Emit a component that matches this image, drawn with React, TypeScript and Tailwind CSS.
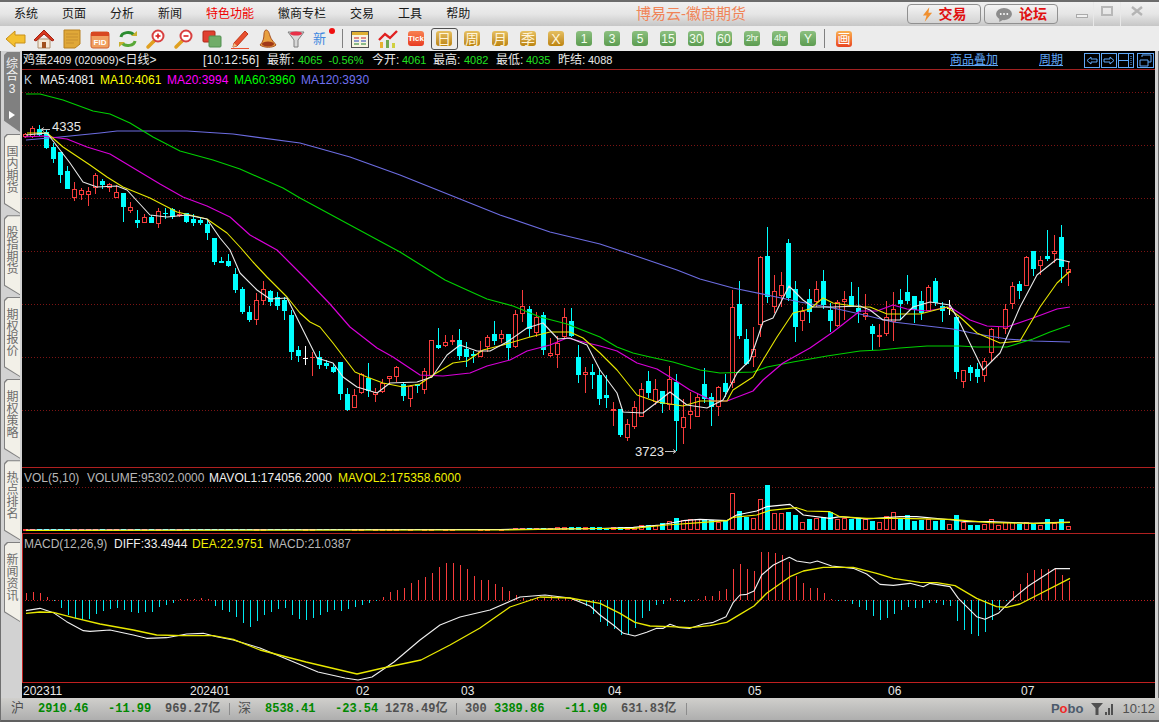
import React from "react";

type Candle = [string, number, number, number, number];

// type, body top, body bottom, wick top, wick bottom (page pixels); x = 25 + 7 * index
const CANDLES: Candle[] = [
  ["r", 134, 137, 133, 138], ["r", 128, 137, 126, 138], ["c", 129, 135, 125, 136], ["c", 132, 148, 129, 149], ["c", 147, 159, 143, 163],
  ["c", 152, 175, 152, 183], ["c", 171, 189, 166, 189], ["r", 189, 198, 182, 201], ["r", 190, 195, 188, 200], ["r", 191, 195, 187, 206],
  ["r", 175, 188, 173, 194], ["c", 181, 185, 179, 189], ["r", 184, 188, 183, 192], ["r", 192, 198, 185, 198], ["c", 193, 207, 193, 222],
  ["r", 207, 211, 202, 213], ["c", 220, 223, 210, 228], ["r", 217, 223, 214, 223], ["c", 217, 223, 215, 223], ["r", 211, 224, 208, 228],
  ["c", 213, 214, 208, 219], ["c", 209, 217, 208, 219], ["r", 214, 216, 210, 217], ["c", 213, 222, 213, 223], ["c", 219, 223, 214, 226],
  ["c", 220, 223, 217, 225], ["c", 224, 233, 220, 240], ["c", 238, 262, 238, 265], ["c", 261, 263, 257, 263], ["c", 261, 266, 254, 267],
  ["c", 274, 290, 268, 293], ["c", 289, 312, 287, 314], ["c", 312, 320, 306, 322], ["r", 300, 320, 293, 325], ["r", 289, 301, 281, 305],
  ["c", 291, 302, 290, 306], ["c", 297, 306, 292, 310], ["c", 300, 311, 297, 320], ["c", 315, 352, 310, 360], ["c", 350, 356, 346, 362],
  ["w", 358, 358, 346, 365], ["r", 357, 357, 352, 376], ["c", 357, 365, 351, 369], ["c", 363, 366, 360, 369], ["c", 367, 372, 363, 373],
  ["c", 362, 394, 362, 400], ["c", 394, 410, 388, 411], ["r", 395, 408, 389, 408], ["r", 374, 393, 373, 394], ["c", 378, 391, 363, 397],
  ["r", 392, 395, 388, 402], ["r", 383, 392, 379, 393], ["r", 376, 379, 376, 385], ["r", 367, 377, 366, 382], ["c", 384, 396, 383, 401],
  ["r", 386, 399, 385, 407], ["c", 384, 386, 384, 393], ["r", 371, 390, 368, 394], ["r", 340, 376, 340, 378], ["c", 345, 348, 328, 349],
  ["r", 342, 346, 335, 347], ["r", 340, 342, 335, 345], ["c", 340, 356, 329, 360], ["c", 349, 357, 342, 367], ["c", 354, 356, 351, 363],
  ["r", 351, 357, 341, 357], ["r", 337, 347, 335, 352], ["c", 334, 341, 321, 345], ["r", 334, 339, 330, 343], ["c", 334, 348, 334, 360],
  ["r", 314, 347, 310, 348], ["r", 306, 314, 290, 322], ["c", 309, 329, 306, 337], ["r", 317, 333, 312, 337], ["c", 315, 350, 312, 355],
  ["r", 353, 356, 338, 357], ["r", 343, 355, 336, 368], ["r", 317, 337, 308, 338], ["c", 321, 336, 308, 337], ["c", 357, 375, 345, 383],
  ["r", 372, 375, 367, 393], ["c", 372, 375, 364, 389], ["c", 375, 399, 368, 405], ["c", 395, 398, 375, 408], ["r", 409, 411, 402, 426],
  ["c", 409, 435, 409, 437], ["r", 424, 438, 419, 441], ["r", 407, 427, 401, 429], ["r", 389, 417, 383, 417], ["c", 381, 393, 371, 398],
  ["r", 389, 402, 379, 405], ["c", 391, 404, 391, 413], ["r", 379, 405, 366, 410], ["c", 382, 421, 374, 451], ["r", 417, 428, 399, 444],
  ["r", 411, 415, 392, 429], ["r", 397, 417, 393, 417], ["c", 384, 399, 368, 403], ["c", 397, 407, 393, 426], ["r", 387, 407, 386, 416],
  ["c", 383, 392, 374, 397], ["r", 307, 383, 290, 388], ["c", 304, 336, 281, 339], ["c", 339, 364, 329, 365], ["r", 349, 357, 327, 367],
  ["r", 257, 325, 256, 337], ["c", 256, 297, 227, 303], ["r", 291, 307, 275, 313], ["r", 285, 296, 272, 307], ["c", 243, 298, 239, 301],
  ["c", 289, 327, 281, 342], ["r", 311, 321, 307, 331], ["c", 299, 312, 289, 323], ["r", 289, 302, 281, 307], ["c", 281, 305, 270, 309],
  ["c", 310, 321, 303, 332], ["r", 302, 326, 300, 327], ["r", 299, 302, 291, 320], ["c", 296, 307, 282, 307], ["c", 308, 312, 287, 323],
  ["r", 313, 317, 294, 320], ["c", 326, 334, 324, 350], ["r", 335, 337, 324, 347], ["r", 317, 334, 301, 336], ["r", 309, 322, 292, 341],
  ["c", 300, 304, 289, 320], ["c", 292, 301, 275, 304], ["c", 296, 310, 296, 323], ["c", 301, 313, 291, 320], ["r", 287, 311, 285, 311],
  ["c", 281, 303, 278, 306], ["c", 306, 311, 302, 322], ["w", 308, 308, 300, 315], ["c", 317, 372, 317, 379], ["r", 370, 382, 370, 388],
  ["c", 367, 373, 365, 381], ["c", 369, 377, 363, 383], ["r", 361, 376, 358, 382], ["r", 329, 353, 328, 362], ["r", 334, 335, 327, 339],
  ["r", 309, 329, 304, 334], ["r", 286, 304, 282, 309], ["c", 284, 291, 281, 299], ["r", 257, 286, 256, 286], ["c", 251, 269, 251, 276],
  ["r", 260, 266, 256, 275], ["c", 256, 259, 230, 261], ["r", 251, 254, 235, 263], ["c", 237, 267, 225, 283], ["r", 269, 273, 262, 286],
];

// bar tops from index 83 on, in crop pixels (page y = 470 + top / 3)
const VOL_TOPS = [
  176, 172, 172, 172, 170, 166, 166, 165, 160, 154, 144, 151, 148, 148, 148, 151, 155, 150, 70, 124,
  140, 144, 88, 45, 130, 130, 126, 135, 157, 147, 143, 142, 127, 147, 143, 147, 143, 147, 153, 157,
  139, 127, 145, 136, 152, 149, 147, 153, 151, 162, 135, 155, 165, 165, 162, 148, 165, 155, 155, 162,
  155, 160, 165, 147, 158, 147, 168,
];

const MACD = [
  7, 8, 7, 3, -1, -8, -15, -18, -20, -19, -14, -11, -9, -8, -10, -12, -13, -12, -12, -7,
  -5, -3, 1, 1, 1, 2, 1, -6, -10, -12, -17, -23, -27, -21, -15, -12, -9, -8, -15, -19,
  -20, -18, -15, -12, -10, -11, -9, -7, -5, -3, -1, 3, 8, 10, 12, 17, 20, 23, 27, 33,
  37, 37, 35, 31, 24, 20, 20, 16, 13, 9, 5, 2, 1, 3, 2, 4, 3, 3, 2, -1, -6, -14,
  -22, -26, -29, -35, -34, -28, -18, -11, -5, -4, 2, -1, -2, -1, 1, 4, 4, 9, 11, 31,
  36, 31, 29, 48, 48, 47, 45, 38, 24, 17, 12, 12, 7, 1, -1, -1, -4, -7, -10, -16,
  -20, -18, -14, -10, -7, -8, -8, -3, -3, -5, -6, -21, -30, -34, -36, -32, -20, -10, -1, 9,
  16, 27, 30, 31, 31, 31, 25, 19,
];

type Pt = [number, number];
const pts = (list: Pt[]) => list.map(([x, y]) => `${x},${y}`).join(" ");
// zoomed crop coordinates to page pixels
const crop = (ox: number, oy: number, list: Pt[]): Pt[] => list.map(([x, y]) => [ox + x / 3, oy + y / 3]);

const MA120: Pt[] = [[26, 140], [60, 137], [100, 133], [117, 131], [157, 131], [187, 131], [233, 134], [300, 143], [350, 157], [400, 175], [450, 195], [500, 215], [550, 232], [600, 244], [633, 255], [677, 270], [700, 279], [733, 288], [767, 295], [800, 302], [833, 308], [860, 314], [893, 322], [927, 326], [953, 329], [977, 334], [1007, 339], [1033, 341], [1070, 342]];
const MA60: Pt[] = [[26, 94], [40, 94], [63, 100], [93, 111], [110, 114], [130, 123], [153, 137], [180, 151], [213, 160], [240, 169], [283, 188], [300, 198], [350, 225], [400, 252], [445, 280], [467, 290], [487, 299], [513, 306], [540, 317], [567, 324], [600, 337], [617, 347], [633, 353], [650, 357], [673, 362], [700, 370], [720, 373], [753, 372], [767, 367], [793, 362], [827, 356], [860, 351], [880, 350], [900, 348], [927, 346], [960, 346], [977, 347], [1007, 347], [1033, 339], [1050, 332], [1070, 325]];
const MA20: Pt[] = [[24, 137], [43, 136], [67, 139], [87, 147], [110, 154], [140, 172], [160, 184], [183, 197], [207, 206], [230, 217], [250, 235], [277, 250], [300, 273], [307, 280], [330, 304], [350, 327], [377, 348], [393, 357], [420, 375], [443, 376], [470, 373], [487, 366], [510, 360], [527, 351], [550, 345], [567, 338], [600, 346], [617, 351], [637, 363], [657, 369], [670, 377], [690, 390], [713, 401], [727, 401], [753, 391], [763, 380], [783, 363], [810, 348], [833, 332], [860, 311], [877, 311], [893, 305], [907, 309], [927, 311], [950, 307], [970, 320], [987, 326], [1007, 327], [1033, 318], [1057, 309], [1070, 307]];
const MA10: Pt[] = [[27, 133], [47, 133], [63, 147], [90, 165], [107, 177], [123, 187], [150, 198], [177, 212], [207, 219], [227, 233], [240, 247], [253, 262], [267, 277], [287, 297], [300, 313], [310, 322], [320, 327], [333, 343], [355, 372], [367, 377], [383, 383], [403, 387], [420, 384], [433, 375], [453, 363], [467, 361], [483, 350], [503, 345], [530, 337], [550, 332], [570, 332], [583, 338], [600, 353], [617, 370], [637, 395], [657, 402], [683, 406], [700, 401], [727, 401], [733, 390], [753, 377], [763, 360], [777, 337], [793, 313], [810, 309], [823, 298], [833, 303], [860, 307], [870, 307], [887, 314], [903, 314], [920, 314], [947, 307], [960, 317], [977, 333], [1000, 343], [1020, 341], [1040, 307], [1057, 283], [1070, 271]];
const MA5: Pt[] = [[26, 135], [47, 133], [60, 150], [70, 163], [83, 182], [97, 187], [117, 186], [127, 190], [150, 215], [167, 217], [187, 215], [207, 219], [220, 238], [230, 250], [240, 273], [257, 290], [270, 299], [287, 298], [300, 324], [317, 358], [333, 363], [343, 377], [357, 387], [377, 393], [390, 383], [417, 382], [432, 377], [447, 355], [460, 345], [477, 351], [490, 351], [507, 342], [527, 328], [543, 323], [558, 339], [570, 338], [587, 345], [600, 370], [617, 393], [623, 412], [643, 413], [660, 400], [670, 392], [687, 405], [707, 408], [723, 400], [737, 373], [750, 360], [763, 322], [773, 318], [789, 286], [803, 300], [813, 307], [833, 307], [860, 306], [870, 310], [883, 320], [900, 320], [913, 307], [930, 302], [950, 305], [960, 323], [983, 370], [1000, 353], [1020, 307], [1037, 275], [1057, 259], [1070, 262]];

const VOL1: Pt[] = [[26, 530], [500, 529.5], [600, 528.5], ...crop(600, 470, [[100, 172], [180, 165], [250, 152], [300, 148], [380, 152], [410, 135], [470, 123], [500, 110], [570, 103], [610, 135], [690, 145], [720, 140], [800, 147], [900, 140], [950, 140], [1060, 150], [1100, 155], [1170, 155], [1300, 160], [1380, 157], [1410, 157]])];
const VOL2: Pt[] = [[26, 530.5], [500, 530], [600, 528.5], ...crop(600, 470, [[100, 175], [200, 165], [300, 158], [380, 152], [400, 142], [470, 135], [510, 121], [590, 113], [620, 123], [690, 125], [720, 140], [800, 145], [900, 145], [1050, 148], [1100, 152], [1170, 158], [1300, 160], [1410, 157]])];

const DIFF: Pt[] = [
  ...crop(0, 460, [[78, 452], [120, 445], [160, 458], [200, 485], [250, 512], [270, 514], [330, 510], [400, 525], [440, 535], [500, 533], [560, 522], [610, 520], [650, 530], [700, 540]]),
  [260, 648], [289, 660], [318, 672], [345, 678], [358, 680], [372, 677], [394, 662], [420, 640], [440, 625], [460, 617], [490, 610], [520, 597], [545, 595], [570, 598], [590, 606],
  ...crop(600, 470, [[0, 435], [40, 465], [70, 490], [105, 498], [140, 487], [170, 475], [190, 475], [210, 463], [235, 472], [270, 475], [310, 462], [340, 457], [378, 440], [400, 397], [420, 375], [440, 373], [462, 363], [485, 315], [520, 285], [568, 262], [590, 273], [630, 279], [652, 273], [695, 288], [760, 295], [800, 312], [840, 343], [880, 346], [930, 340], [970, 350], [990, 340], [1050, 350], [1075, 385], [1130, 440], [1155, 448], [1195, 430], [1240, 385], [1285, 348], [1365, 296], [1410, 296]]),
];
const DEA: Pt[] = [
  ...crop(0, 460, [[78, 460], [120, 456], [160, 457], [220, 473], [300, 492], [400, 510], [470, 525], [550, 527], [640, 527], [700, 538]]),
  [260, 650], [306, 662], [357, 674], [383, 668], [421, 660], [450, 645], [480, 628], [510, 607], [540, 597], [570, 598],
  ...crop(600, 470, [[0, 400], [60, 430], [105, 457], [150, 468], [210, 470], [270, 473], [330, 467], [380, 457], [420, 433], [462, 408], [500, 370], [570, 320], [610, 303], [670, 292], [760, 292], [830, 310], [880, 325], [960, 337], [1010, 338], [1065, 347], [1130, 385], [1190, 410], [1220, 412], [1260, 402], [1410, 325]]),
];

const RED = "#f83c3c";
const CYAN = "#00ffff";

function Line({ data, color, width = 1.1 }: { data: Pt[]; color: string; width?: number }) {
  return <polyline points={pts(data)} fill="none" stroke={color} strokeWidth={width} strokeLinejoin="round" />;
}

function Dotted({ y, color = "#7c1414", x2 = 1155 }: { y: number; color?: string; x2?: number }) {
  return <line x1={22} x2={x2} y1={y + 0.5} y2={y + 0.5} stroke={color} strokeDasharray="1 2" shapeRendering="crispEdges" />;
}

function CandleMark({ c, i }: { c: Candle; i: number }) {
  const x = 25 + 7 * i;
  const [t, top, bot, wt, wb] = c;
  const color = t === "r" ? RED : t === "c" ? CYAN : "#ffffff";
  return (
    <g shapeRendering="crispEdges">
      <line x1={x + 0.5} x2={x + 0.5} y1={wt} y2={wb} stroke={color} />
      {bot - top < 1 ? (
        <line x1={x - 2} x2={x + 3} y1={top + 0.5} y2={top + 0.5} stroke={color} />
      ) : t === "r" ? (
        <rect x={x - 1.5} y={top + 0.5} width={4} height={bot - top - 1} fill="#000" stroke={color} />
      ) : (
        <rect x={x - 2} y={top} width={5} height={bot - top} fill={color} />
      )}
    </g>
  );
}

function PriceChart() {
  return (
    <svg viewBox="22 70 1133 397" className="absolute inset-0 w-full h-full">
      {[92, 145, 198, 251, 304, 357, 410].map((y) => (
        <Dotted key={y} y={y} />
      ))}
      {CANDLES.map((c, i) => (
        <CandleMark key={i} c={c} i={i} />
      ))}
      <Line data={MA120} color="#6c6ce0" width={1.2} />
      <Line data={MA60} color="#00d000" width={1.2} />
      <Line data={MA20} color="#d800d8" width={1.2} />
      <Line data={MA10} color="#e8e800" />
      <Line data={MA5} color="#e8e8e8" />
      <text x={52} y={131} fill="#e8e8e8" fontSize={13} fontFamily="Liberation Sans">4335</text>
      <path d="M50 129.5H41M41 129.5l3-2M41 129.5l3 2" stroke="#c0c0c0" fill="none" />
      <text x={635} y={456} fill="#e8e8e8" fontSize={13} fontFamily="Liberation Sans">3723</text>
      <path d="M665 451.5h11M676 451.5l-3-2M676 451.5l-3 2" stroke="#c0c0c0" fill="none" />
    </svg>
  );
}

function VolumeChart() {
  return (
    <svg viewBox="22 468 1133 65" className="absolute inset-0 w-full h-full">
      <Dotted y={487} />
      {CANDLES.map((c, i) => {
        const x = 25 + 7 * i;
        const h = i >= 83 ? (180 - VOL_TOPS[i - 83]) / 3 : i >= 70 ? 2 + (i - 70) * 0.1 : i >= 60 ? 1.5 : 1;
        const top = Math.round(530 - h);
        return c[0] === "c" ? (
          <rect key={i} x={x - 2} y={top} width={5} height={530 - top} fill={CYAN} shapeRendering="crispEdges" />
        ) : (
          <rect key={i} x={x - 1.5} y={top + 0.5} width={4} height={Math.max(530 - top - 1, 0.5)} fill="#000" stroke={RED} shapeRendering="crispEdges" />
        );
      })}
      <Line data={VOL1} color="#ffffff" />
      <Line data={VOL2} color="#f0f000" />
    </svg>
  );
}

function MacdChart() {
  return (
    <svg viewBox="23 534 1132 148" className="absolute inset-0 w-full h-full">
      <Dotted y={600} color="#c02020" />
      {MACD.map((v, i) => {
        const x = 26.5 + 7 * i;
        return <line key={i} x1={x} x2={x} y1={600} y2={600 - v} stroke={v > 0 ? RED : "#00e8f0"} shapeRendering="crispEdges" />;
      })}
      <Line data={DIFF} color="#f0f0f0" />
      <Line data={DEA} color="#e8e800" width={1.3} />
    </svg>
  );
}

const ICON_CLS = "w-[22px] h-[22px]";

function ToolIcon({ name }: { name: string }) {
  switch (name) {
    case "back":
      return (
        <svg viewBox="0 0 22 22" className={ICON_CLS}>
          <path d="M1 11 10 3v4h10v8H10v4z" fill="#f4c030" stroke="#c89018" />
        </svg>
      );
    case "home":
      return (
        <svg viewBox="0 0 22 22" className={ICON_CLS}>
          <path d="M5 11h12v9H5z" fill="#f4e8d8" stroke="#b09070" />
          <path d="M9 14h4v6H9z" fill="#a05020" />
          <path d="M1 12 11 2l10 10-2 1-8-7-8 7z" fill="#d83820" stroke="#a02010" />
        </svg>
      );
    case "note":
      return (
        <svg viewBox="0 0 22 22" className={ICON_CLS}>
          <path d="M3 2h16v14l-5 4H3z" fill="#e0a838" stroke="#b88020" />
          <path d="M5 6h12M5 9h12M5 12h12M5 15h8" stroke="#c89030" />
        </svg>
      );
    case "fid":
      return (
        <svg viewBox="0 0 22 22" className={ICON_CLS}>
          <rect x="2" y="4" width="18" height="16" rx="2" fill="#f0a060" stroke="#d06030" />
          <rect x="2" y="4" width="18" height="4" fill="#d84820" />
          <text x="11" y="17" textAnchor="middle" fontSize="8" fontWeight="bold" fill="#fff" fontFamily="Liberation Sans">FID</text>
        </svg>
      );
    case "refresh":
      return (
        <svg viewBox="0 0 22 22" className={ICON_CLS}>
          <path d="M4 9a7 5 0 0 1 13-2" fill="none" stroke="#2c8c30" strokeWidth="3" />
          <path d="M18 13a7 5 0 0 1-13 2" fill="none" stroke="#58a838" strokeWidth="3" />
          <path d="M14 8h6V3z" fill="#c8b030" />
          <path d="M8 14H2v5z" fill="#c8b030" />
        </svg>
      );
    case "zoomin":
    case "zoomout":
      return (
        <svg viewBox="0 0 22 22" className={ICON_CLS}>
          <path d="M9 13 3 19" stroke="#e0a020" strokeWidth="3.5" strokeLinecap="round" />
          <circle cx="13" cy="8" r="5.5" fill="#fff" stroke="#d84040" strokeWidth="2" />
          <path d="M10.5 8h5" stroke="#d82020" strokeWidth="1.6" />
          {name === "zoomin" && <path d="M13 5.5v5" stroke="#d82020" strokeWidth="1.6" />}
        </svg>
      );
    case "windows":
      return (
        <svg viewBox="0 0 22 22" className={ICON_CLS}>
          <rect x="2" y="3" width="12" height="11" rx="1" fill="#e04030" stroke="#b02818" />
          <rect x="8" y="8" width="12" height="11" rx="1" fill="#70ac68" stroke="#509050" />
        </svg>
      );
    case "pen":
      return (
        <svg viewBox="0 0 22 22" className={ICON_CLS}>
          <path d="M5 15 16 3l3 3L8 18l-4 1z" fill="#e85030" stroke="#c03818" />
          <path d="M5 15l3 3-4 1z" fill="#f0c888" />
          <path d="M2 20.5h18" stroke="#e85030" />
        </svg>
      );
    case "bell":
      return (
        <svg viewBox="0 0 22 22" className={ICON_CLS}>
          <path d="M9 2c2 0 3 2 4 6s5 7 6 9c-3 3-12 3-16 0 3-3 4-7 4-11 0-2 1-4 2-4z" fill="#e8a040" stroke="#a85020" />
          <ellipse cx="11" cy="16" rx="6" ry="2.5" fill="#a03818" />
        </svg>
      );
    case "funnel":
      return (
        <svg viewBox="0 0 22 22" className={ICON_CLS}>
          <path d="M3 4h16l-6 8v7h-4v-7z" fill="#d8d8d8" stroke="#808080" />
          <ellipse cx="11" cy="5.5" rx="6" ry="2" fill="#e83048" />
        </svg>
      );
    case "new":
      return (
        <div className="relative w-[22px] h-[22px] flex items-center">
          <span className="text-[13px] text-[#4088e0]">新</span>
          <span className="absolute right-0 top-0 w-[6px] h-[6px] rounded-full bg-[#f01010]" />
        </div>
      );
    case "table":
      return (
        <svg viewBox="0 0 22 22" className={ICON_CLS}>
          <rect x="2.5" y="3.5" width="17" height="16" fill="#f8f4e0" stroke="#505050" />
          <rect x="3" y="4" width="16" height="3" fill="#e0b030" />
          <path d="M5 10h5M12 10h5" stroke="#d02020" />
          <path d="M5 13h5M12 13h5" stroke="#2040c0" />
          <path d="M5 16h5M12 16h5" stroke="#208030" />
        </svg>
      );
    case "chart":
      return (
        <svg viewBox="0 0 22 22" className={ICON_CLS}>
          <path d="M3 14h3v6H3z" fill="#e8b030" />
          <path d="M9 12h3v8H9z" fill="#70a850" />
          <path d="M15 15h3v5h-3z" fill="#d0d040" />
          <path d="M2 12 8 6l5 4 7-7" fill="none" stroke="#e02020" strokeWidth="2.4" />
        </svg>
      );
    default:
      return null;
  }
}

function Period({ label, tone, selected }: { label: string; tone: "gold" | "green"; selected?: boolean }) {
  const toneCls = tone === "gold" ? "from-[#e6c060] to-[#bc8408] text-[#fff4d8]" : "from-[#8cc080] to-[#5c9c50] text-[#f4fff0]";
  const size = label.length > 2 ? "text-[9px] tracking-[-0.4px]" : tone === "gold" ? "text-[14px]" : "text-[12px]";
  return (
    <div className="w-7 h-[25px] flex items-center justify-center">
      <div className={selected ? "w-[27px] h-[22px] rounded-[3px] border border-[#505050] flex items-center justify-center" : "contents"}>
        <div className={`w-4 h-[15px] rounded-[3px] bg-linear-to-b flex items-center justify-center leading-none ${toneCls} ${size}`}>{label}</div>
      </div>
    </div>
  );
}

function Toolbar() {
  const left = ["back", "home", "note", "fid", "refresh", "zoomin", "zoomout", "windows", "pen", "bell", "funnel", "new"];
  return (
    <div className="h-[25px] flex items-center pl-0.5 bg-[#ececec]">
      {left.map((n) => (
        <div key={n} className="w-7 h-[25px] flex items-center justify-center">
          <ToolIcon name={n} />
        </div>
      ))}
      <div className="w-[8px] h-[25px] flex items-center justify-center">
        <div className="w-px h-[19px] bg-[#808080]" />
      </div>
      {["table", "chart"].map((n) => (
        <div key={n} className="w-7 h-[25px] flex items-center justify-center">
          <ToolIcon name={n} />
        </div>
      ))}
      <div className="w-7 h-[25px] flex items-center justify-center">
        <div className="w-4 h-[15px] rounded-[3px] bg-linear-to-b from-[#f88050] to-[#e83820] text-white text-[8px] font-bold flex items-center justify-center">Tick</div>
      </div>
      <Period label="日" tone="gold" selected />
      <Period label="周" tone="gold" />
      <Period label="月" tone="gold" />
      <Period label="季" tone="gold" />
      <Period label="X" tone="gold" />
      {["1", "3", "5", "15", "30", "60", "2hr", "4hr", "Y"].map((l) => (
        <Period key={l} label={l} tone="green" />
      ))}
      <div className="w-[4px] h-[25px] flex items-center justify-center">
        <div className="w-px h-[19px] bg-[#808080]" />
      </div>
      <div className="w-7 h-[25px] ml-1 flex items-center justify-center">
        <div className="w-4 h-4 rounded-[3px] bg-linear-to-b from-[#f8b050] to-[#e84020] text-white text-[13px] leading-none flex items-center justify-center">画</div>
      </div>
    </div>
  );
}

function TitleBar() {
  const menus = ["系统", "页面", "分析", "新闻"];
  const menus2 = ["徽商专栏", "交易", "工具", "帮助"];
  return (
    <div className="h-[26px] flex items-center border-t-2 border-[#6c6c6c] bg-linear-to-b from-[#f0f0f0] via-[#e6e6e6] to-[#c6c6c6] text-[12px] text-[#181818]">
      <div className="flex gap-6 pl-3.5 w-[636px]">
        {menus.map((m) => (
          <span key={m}>{m}</span>
        ))}
        <span className="text-[#f00000]">特色功能</span>
        {menus2.map((m) => (
          <span key={m}>{m}</span>
        ))}
      </div>
      <span className="w-[271px] text-[15px] text-[#f08458]">博易云-徽商期货</span>
      <div className="w-[74px] h-[20px] rounded-[4px] border border-[#909090] bg-linear-to-b from-[#f4f4f4] to-[#d4d4d4] flex items-center justify-center gap-1.5 text-[14px] font-bold text-[#e01010]">
        <svg viewBox="0 0 12 16" className="w-[11px] h-[15px]">
          <path d="M8 0 1 9h4l-2 7 8-10H7z" fill="#f09030" />
        </svg>
        交易
      </div>
      <div className="ml-[3px] w-[74px] h-[20px] rounded-[4px] border border-[#909090] bg-linear-to-b from-[#f4f4f4] to-[#d4d4d4] flex items-center justify-center gap-1.5 text-[14px] font-bold text-[#e01010]">
        <svg viewBox="0 0 18 16" className="w-[18px] h-[15px]">
          <ellipse cx="9" cy="7.5" rx="8.5" ry="6.5" fill="#8c8c8c" />
          <path d="M4 12v4l5-3z" fill="#8c8c8c" />
          <circle cx="5.5" cy="7.5" r="1" fill="#fff" />
          <circle cx="9" cy="7.5" r="1" fill="#fff" />
          <circle cx="12.5" cy="7.5" r="1" fill="#fff" />
        </svg>
        论坛
      </div>
      <div className="flex ml-[12px] self-start h-[24px] text-white">
        <div className="w-[24px] flex items-center justify-center border-r border-[#e8e8e8]">
          <div className="w-[12px] h-[4px] mt-1 bg-[#f0f0f0] border border-[#aaa]" />
        </div>
        <div className="w-[27px] flex items-start pt-[4px] justify-center border-r border-[#e8e8e8]">
          <div className="w-[12px] h-[10px] border-2 border-[#b8b8b8]" />
        </div>
        <div className="w-[32px] flex items-start justify-center">
          <svg viewBox="0 0 12 10" className="w-[12px] h-[10px] mt-[4px]">
            <path d="M1 1l10 8M11 1 1 9" stroke="#b4b4b4" strokeWidth="2.4" />
          </svg>
        </div>
      </div>
    </div>
  );
}

function SideTab({ text }: { text: string }) {
  return (
    <div className="relative h-[80px] mb-[1.67px] bg-[#808080] [clip-path:polygon(3px_0,100%_0,100%_100%,0_88%,0_3px)]">
      <div className="absolute inset-y-px left-px right-0 bg-[#f2f0e8] pt-[11px] flex flex-col items-center text-[12px] leading-[12px] text-[#6c6c6c] [clip-path:polygon(3px_0,100%_0,100%_100%,0_88%,0_3px)]">
        {text.split("").map((ch) => (
          <span key={ch} className="block h-[12px]">{ch}</span>
        ))}
      </div>
    </div>
  );
}

function SideTabs() {
  return (
    <div className="w-[22px] pl-[3px] pr-[2px] pt-px border-l border-[#707070] bg-[#d2d2d2]">
      <div className="relative h-[80px] mb-[1.67px] bg-[#808080] pt-[6px] text-[#f0f0f0] flex flex-col items-center text-[12px] leading-[12px] [clip-path:polygon(3px_0,100%_0,100%_100%,0_86%,0_3px)]">
        <span className="block h-[12px]">综</span>
        <span className="block h-[12px]">合</span>
        <span className="block mt-px h-[12px]">3</span>
        <span className="block mt-[16px] w-0 h-0 border-y-[4px] border-y-transparent border-l-[6px] border-l-white" />
      </div>
      {["国内期货", "股指期货", "期权报价", "期权策略", "热点排名", "新闻资讯"].map((t) => (
        <SideTab key={t} text={t} />
      ))}
    </div>
  );
}

function InfoBar() {
  const g = "text-[11px] text-[#20e020]";
  return (
    <div className="h-[19px] flex items-center border-b border-[#a02020] pl-px text-[12px] text-[#e8e8e8] whitespace-nowrap">
      <span className="w-[180px]">
        鸡蛋<span className="text-[11px]">2409 (020909)</span>&lt;日线&gt;
      </span>
      <span className="w-[64px] tracking-[0.3px]">[10:12:56]</span>
      <span className="w-[31px]">最新:</span>
      <span className={`w-[74px] ${g}`}>4065&nbsp;&nbsp;-0.56%</span>
      <span className="w-[30px]">今开:</span>
      <span className={`w-[31px] ${g}`}>4061</span>
      <span className="w-[31px]">最高:</span>
      <span className={`w-[32px] ${g}`}>4082</span>
      <span className="w-[30px]">最低:</span>
      <span className={`w-[32px] ${g}`}>4035</span>
      <span className="w-[30px]">昨结:</span>
      <span className="text-[11px]">4088</span>
      <div className="ml-auto flex items-center text-[#60a8f8] underline">
        <span className="w-[89px]">商品叠加</span>
        <span className="w-[45px]">周期</span>
      </div>
      <svg viewBox="0 0 71 15" className="w-[71px] h-[15px]">
        <g fill="none" stroke="#60a8f8">
          <rect x=".5" y=".5" width="15" height="14" />
          <path d="M3 7.5 7 4v2h6v3H7v2z" />
          <rect x="17.5" y=".5" width="15" height="14" />
          <path d="M30 7.5 26 4v2h-6v3h6v2z" />
          <rect x="34.5" y=".5" width="15" height="14" />
          <path d="M35 7.5h9M44.5 1v13" />
          <path d="M47 3v9" strokeDasharray="1 1" />
          <rect x="53.5" y=".5" width="16" height="14" />
          <path d="M58 4V2h9v7h-3M56 7h8v6h-8z" />
        </g>
      </svg>
    </div>
  );
}

function Stat({ w, children, cls }: { w: string; children: React.ReactNode; cls: string }) {
  return <span className={`${w} ${cls}`}>{children}</span>;
}

function StatusBar() {
  const green = "text-[#008800]";
  const grey = "text-[#505050]";
  const mono = "font-['Liberation_Mono','Noto_Sans_CJK_SC',monospace] font-bold text-[12px]";
  const sep = <span className="w-px h-[12px] bg-[#8c8c8c]" />;
  return (
    <div className={`h-[24px] flex items-center bg-linear-to-b from-[#d0cfcc] to-[#aeaeae] border-b-2 border-[#606060] border-l border-l-[#707070] whitespace-nowrap ${mono}`}>
      <Stat w="w-[27px] pl-[10px]" cls="text-[#505050] font-normal text-[13px]">沪</Stat>
      <span className="ml-[10px]" />
      <Stat w="w-[70px]" cls={green}>2910.46</Stat>
      <Stat w="w-[57px]" cls={green}>-11.99</Stat>
      <Stat w="w-[64px]" cls={grey}>969.27亿</Stat>
      {sep}
      <Stat w="w-[28px] pl-[8px]" cls="text-[#505050] font-normal text-[13px]">深</Stat>
      <span className="ml-[7px]" />
      <Stat w="w-[70px]" cls={green}>8538.41</Stat>
      <Stat w="w-[50px]" cls={green}>-23.54</Stat>
      <Stat w="w-[71px]" cls={grey}>1278.49亿</Stat>
      {sep}
      <Stat w="w-[37px] pl-[8px]" cls={grey}>300</Stat>
      <Stat w="w-[70px]" cls={green}>3389.86</Stat>
      <Stat w="w-[57px]" cls={green}>-11.90</Stat>
      <Stat w="w-[65px]" cls={grey}>631.83亿</Stat>
      {sep}
      <span className="ml-auto font-['Liberation_Sans'] text-[13px] text-[#4c5a6c]">
        P<span className="text-[#f02828]">o</span>bo
      </span>
      <svg viewBox="0 0 22 14" className="ml-2 w-[22px] h-[14px]">
        <path d="M0 1h12L7.5 6v7h-3V6z" fill="#505050" />
        <path d="M14 10h2v3h-2zM17 6h2v7h-2zM20 2h2v11h-2z" fill="#505050" />
      </svg>
      <span className="ml-[9px] mr-[4px] font-['Liberation_Sans'] font-normal text-[13px] text-[#505050]">10:12</span>
    </div>
  );
}

export default function App() {
  return (
    <div className="w-[1159px] h-[722px] flex flex-col overflow-hidden bg-[#d2d2d2] font-['Liberation_Sans','Noto_Sans_CJK_SC',sans-serif]">
      <TitleBar />
      <Toolbar />
      <div className="flex-1 flex min-h-0">
        <SideTabs />
        <div className="w-[1133px] flex flex-col bg-black text-[12px] whitespace-nowrap">
          <InfoBar />
          {/* main price panel */}
          <div className="relative h-[398px] border-b border-[#b02020]">
            <PriceChart />
            <div className="relative flex pl-[2px] pt-[3px] leading-[14px]">
              <span className="w-[16px] text-[#b8c8d8]">K</span>
              <span className="w-[60px] text-[#f0f0f0]">MA5:4081</span>
              <span className="w-[67px] text-[#ffff00]">MA10:4061</span>
              <span className="w-[67px] text-[#ff00ff]">MA20:3994</span>
              <span className="w-[67px] text-[#00ff00]">MA60:3960</span>
              <span className="text-[#7070f0]">MA120:3930</span>
            </div>
          </div>
          {/* volume */}
          <div className="relative h-[66px] border-b border-[#b02020]">
            <VolumeChart />
            <div className="relative flex pl-[2px] pt-[3px] leading-[14px] text-[#b8b8b8]">
              <span className="w-[63px]">VOL(5,10)</span>
              <span className="w-[122px]">VOLUME:95302.0000</span>
              <span className="w-[129px] tracking-[0.1px] text-[#f0f0f0]">MAVOL1:174056.2000</span>
              <span className="tracking-[0.1px] text-[#f0f000]">MAVOL2:175358.6000</span>
            </div>
          </div>
          {/* macd */}
          <div className="relative h-[149px] border-b border-l border-[#c02020]">
            <MacdChart />
            <div className="relative flex pl-px pt-[3px] leading-[14px] text-[#b8b8b8]">
              <span className="w-[90px]">MACD(12,26,9)</span>
              <span className="w-[78px] text-[#f0f0f0]">DIFF:33.4944</span>
              <span className="w-[77px] text-[#f0f000]">DEA:22.9751</span>
              <span>MACD:21.0387</span>
            </div>
          </div>
          {/* time axis */}
          <div className="flex-1 flex items-center pl-px text-[#e8e8e8] leading-none">
            <span className="w-[167px]">202311</span>
            <span className="w-[166px]">202401</span>
            <span className="w-[105px]">02</span>
            <span className="w-[147px]">03</span>
            <span className="w-[140px]">04</span>
            <span className="w-[140px]">05</span>
            <span className="w-[133px]">06</span>
            <span>07</span>
          </div>
        </div>
        <div className="w-1 border-r border-[#707070]" />
      </div>
      <StatusBar />
    </div>
  );
}
